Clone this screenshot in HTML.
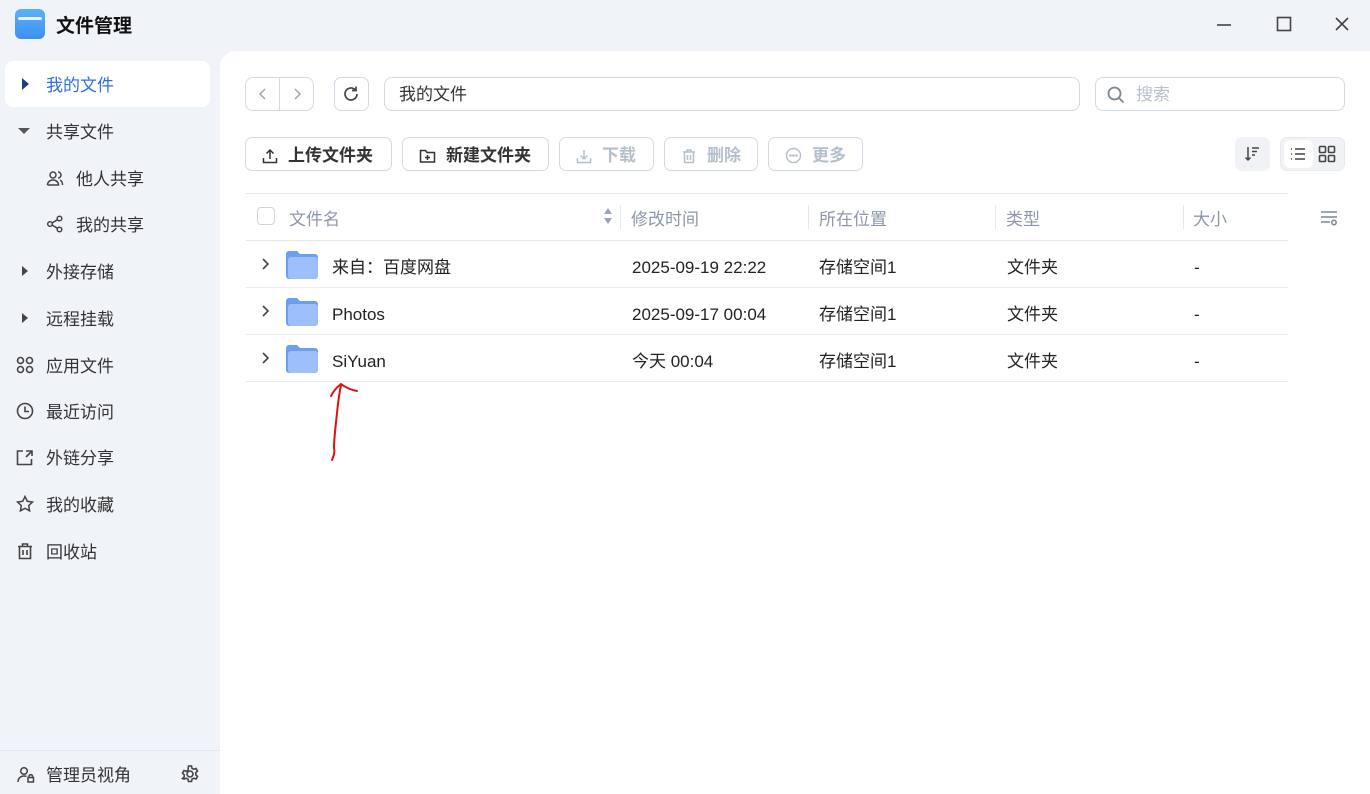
<!DOCTYPE html>
<html><head><meta charset="utf-8">
<style>
*{box-sizing:border-box;margin:0;padding:0}
body{width:1370px;height:794px;background:#f0f3f8;font-family:"Liberation Sans","Noto Sans CJK SC",sans-serif;position:relative;overflow:hidden;color:#222;line-height:27px}
.a{position:absolute}
.main{position:absolute;left:220px;top:51px;width:1150px;height:743px;background:#fff;border-top-left-radius:16px}
.nav{position:absolute;left:0;width:210px;height:46px;font-size:17px;color:#333}
.nav .ic{position:absolute;left:16px;top:14px;width:18px;height:18px}
.nav .t{position:absolute;left:46px;top:11px}
.btn{position:absolute;top:137px;height:34px;border:1px solid #d3dae5;border-radius:7px;font-size:17px;font-weight:bold;color:#333;display:flex;align-items:center;padding-top:3px}
.btn svg{margin-top:-3px}
.btn.dis{color:#b5bfcc}
.hd{position:absolute;top:206px;font-size:17px;color:#8c97a8}
.sep{position:absolute;top:205px;width:1px;height:24px;background:#e3e7ee}
.row{position:absolute;left:246px;width:1042px;height:47px;border-bottom:1px solid #e8ecf1;font-size:17px;color:#222}
.row span{position:absolute;top:13px}
svg{display:block}
</style></head><body>
<div class="a" style="left:15px;top:9px;width:30px;height:30px;border-radius:6px;background:linear-gradient(#5ab2f7,#3d8ff0)"><div style="position:absolute;left:3px;top:8px;width:24px;height:3px;background:#e7f3ff;border-radius:2px"></div></div>
<div class="a" style="left:56px;top:13px;font-size:19px;font-weight:bold;color:#111">文件管理</div>
<svg class="a" style="left:1216px;top:17px" width="16" height="16"><path d="M1 8h14" stroke="#444" stroke-width="1.6"/></svg>
<svg class="a" style="left:1276px;top:16px" width="16" height="16"><rect x="1.5" y="1.5" width="13" height="13" fill="none" stroke="#444" stroke-width="1.6"/></svg>
<svg class="a" style="left:1334px;top:16px" width="16" height="16"><path d="M2 2l12 12M14 2L2 14" stroke="#444" stroke-width="1.6"/></svg>

<div class="a" style="left:5px;top:61px;width:205px;height:46px;background:#fff;border-radius:8px"></div>
<div class="nav" style="top:61px"><svg class="ic" viewBox="0 0 18 18"><path d="M6 3l7 6-7 6z" fill="#1a3f8a"/></svg><span class="t" style="color:#2f6fe0">我的文件</span></div>
<div class="nav" style="top:108px"><svg class="ic" viewBox="0 0 18 18"><path d="M2 6h12l-6 6z" fill="#555"/></svg><span class="t">共享文件</span></div>
<div class="nav" style="top:155px"><svg class="ic" style="left:46px" viewBox="0 0 18 18" fill="none" stroke="#444" stroke-width="1.5"><circle cx="7" cy="6" r="3"/><path d="M1.5 16c0-3 2.5-5 5.5-5s5.5 2 5.5 5H1.5M12 3a3 3 0 010 6M14 11c1.5.7 2.5 2.5 2.5 5"/></svg><span class="t" style="left:76px">他人共享</span></div>
<div class="nav" style="top:201px"><svg class="ic" style="left:46px" viewBox="0 0 18 18" fill="none" stroke="#444" stroke-width="1.5"><circle cx="4" cy="9" r="2.3"/><circle cx="13.5" cy="3.5" r="2.3"/><circle cx="13.5" cy="14.5" r="2.3"/><path d="M6 8l5.5-3.3M6 10l5.5 3.3"/></svg><span class="t" style="left:76px">我的共享</span></div>
<div class="nav" style="top:248px"><svg class="ic" viewBox="0 0 18 18"><path d="M6 4l6 5-6 5z" fill="#444"/></svg><span class="t">外接存储</span></div>
<div class="nav" style="top:295px"><svg class="ic" viewBox="0 0 18 18"><path d="M6 4l6 5-6 5z" fill="#444"/></svg><span class="t">远程挂载</span></div>
<div class="nav" style="top:342px"><svg class="ic" viewBox="0 0 18 18" fill="none" stroke="#444" stroke-width="1.6"><circle cx="4.5" cy="4.5" r="3"/><circle cx="13.5" cy="4.5" r="3"/><circle cx="4.5" cy="13.5" r="3"/><circle cx="13.5" cy="13.5" r="3"/></svg><span class="t">应用文件</span></div>
<div class="nav" style="top:388px"><svg class="ic" viewBox="0 0 18 18" fill="none" stroke="#444" stroke-width="1.6"><circle cx="9" cy="9" r="7.5"/><path d="M9 4.5V9.5h4"/></svg><span class="t">最近访问</span></div>
<div class="nav" style="top:434px"><svg class="ic" viewBox="0 0 18 18" fill="none" stroke="#444" stroke-width="1.6"><path d="M7 3H1.5v13.5h14V11M10 3h6v5M16 3l-6 6"/></svg><span class="t">外链分享</span></div>
<div class="nav" style="top:481px"><svg class="ic" viewBox="0 0 18 18" fill="none" stroke="#444" stroke-width="1.5"><path d="M9 1.5l2.3 4.8 5.2.7-3.8 3.6.9 5.2L9 13.3l-4.6 2.5.9-5.2L1.5 7l5.2-.7z"/></svg><span class="t">我的收藏</span></div>
<div class="nav" style="top:528px"><svg class="ic" viewBox="0 0 18 18" fill="none" stroke="#444" stroke-width="1.6"><path d="M2 4.5h14M6.5 4.5V2h5v2.5M3.5 4.5V16.5h11V4.5M7 8v5M11 8v5"/></svg><span class="t">回收站</span></div>

<div class="a" style="left:0;top:750px;width:1370px;height:1px;background:#e3e8f0"></div>
<svg class="a" style="left:17px;top:766px" width="18" height="18" viewBox="0 0 18 18" fill="none" stroke="#444" stroke-width="1.5"><circle cx="7" cy="5" r="3.3"/><path d="M1 16c0-3.5 2.5-6 6-6 1 0 2 .2 2.5.5"/><rect x="11" y="11.5" width="5.5" height="4.5"/><path d="M12 11.5v-1.5a1.8 1.8 0 013.5 0v1.5"/></svg>
<div class="a" style="left:46px;top:762px;font-size:17px;color:#333">管理员视角</div>
<svg class="a" style="left:180px;top:764px" width="20" height="20" viewBox="0 0 20 20" fill="none" stroke="#444" stroke-width="1.6"><circle cx="10" cy="10" r="3"/><path d="M8.5 2h3l.5 2.3 1.8 1 2.2-.8 1.5 2.6-1.7 1.6v2.1l1.7 1.6-1.5 2.6-2.2-.8-1.8 1-.5 2.3h-3l-.5-2.3-1.8-1-2.2.8L2.5 14.5l1.7-1.6v-2.1L2.5 9.1 4 6.5l2.2.8 1.8-1z"/></svg>
<div class="a" style="left:240px;top:761px;font-size:14px;color:#8a94a3">共 3 项</div>

<div class="main"></div>
<div class="a" style="left:245px;top:77px;width:69px;height:34px;border:1px solid #d3dae5;border-radius:8px"></div>
<div class="a" style="left:279px;top:78px;width:1px;height:32px;background:#d3dae5"></div>
<svg class="a" style="left:256px;top:87px" width="14" height="14"><path d="M9 2L4 7l5 5" fill="none" stroke="#9aa4b2" stroke-width="1.5"/></svg>
<svg class="a" style="left:290px;top:87px" width="14" height="14"><path d="M5 2l5 5-5 5" fill="none" stroke="#9aa4b2" stroke-width="1.5"/></svg>
<div class="a" style="left:334px;top:77px;width:35px;height:34px;border:1px solid #d3dae5;border-radius:7px"></div>
<svg class="a" style="left:341px;top:84px" width="20" height="20" viewBox="0 0 20 20" fill="none" stroke="#444" stroke-width="1.7"><path d="M16 10a6 6 0 11-2-4.5"/><path d="M15 2.5V6.5h-4"/></svg>
<div class="a" style="left:384px;top:77px;width:696px;height:34px;border:1px solid #d3dae5;border-radius:8px;font-size:17px;color:#333;padding:3px 0 0 14px">我的文件</div>
<div class="a" style="left:1095px;top:77px;width:250px;height:34px;border:1px solid #d3dae5;border-radius:8px;font-size:17px;color:#b8c0cc;padding:3px 0 0 40px">搜索</div>
<svg class="a" style="left:1106px;top:85px" width="20" height="20" viewBox="0 0 20 20" fill="none" stroke="#7a8595" stroke-width="1.8"><circle cx="8.5" cy="8.5" r="6"/><path d="M13 13l4.5 4.5"/></svg>

<div class="btn" style="left:245px;width:147px"><svg style="margin:0 10px 0 16px" width="16" height="16" viewBox="0 0 16 16" fill="none" stroke="#333" stroke-width="1.5"><path d="M8 11V2M4.5 5.5L8 2l3.5 3.5M1.5 10v4.5h13V10"/></svg>上传文件夹</div>
<div class="btn" style="left:402px;width:147px"><svg style="margin:0 10px 0 16px" width="17" height="16" viewBox="0 0 17 16" fill="none" stroke="#333" stroke-width="1.5"><path d="M1.5 2.5h5l1.5 2h7.5v9.5h-14z"/><path d="M8.5 7v5M6 9.5h5"/></svg>新建文件夹</div>
<div class="btn dis" style="left:559px;width:95px"><svg style="margin:0 10px 0 16px" width="16" height="16" viewBox="0 0 16 16" fill="none" stroke="#b5bfcc" stroke-width="1.5"><path d="M8 2v9M4.5 7.5L8 11l3.5-3.5M1.5 10v4.5h13V10"/></svg>下载</div>
<div class="btn dis" style="left:664px;width:94px"><svg style="margin:0 10px 0 16px" width="16" height="16" viewBox="0 0 16 16" fill="none" stroke="#b5bfcc" stroke-width="1.5"><path d="M2 4h12M6 4V2h4v2M3.5 4v10.5h9V4M6.5 7v5M9.5 7v5"/></svg>删除</div>
<div class="btn dis" style="left:768px;width:95px"><svg style="margin:0 10px 0 16px" width="17" height="17" viewBox="0 0 17 17" fill="none" stroke="#b5bfcc" stroke-width="1.4"><circle cx="8.5" cy="8.5" r="7"/><circle cx="5.5" cy="8.5" r=".6" fill="#b5bfcc"/><circle cx="8.5" cy="8.5" r=".6" fill="#b5bfcc"/><circle cx="11.5" cy="8.5" r=".6" fill="#b5bfcc"/></svg>更多</div>

<div class="a" style="left:1235px;top:137px;width:35px;height:34px;background:#f0f2f5;border-radius:7px"></div>
<svg class="a" style="left:1244px;top:145px" width="18" height="18" viewBox="0 0 18 18" fill="none" stroke="#444" stroke-width="1.5"><path d="M4 2v13M1.5 12.5L4 15l2.5-2.5M8 3h7M8 6.5h5M8 10h3"/></svg>
<div class="a" style="left:1280px;top:137px;width:65px;height:34px;background:#f0f2f5;border-radius:7px;border:1px solid #e6e9ee"></div>
<div class="a" style="left:1284px;top:140px;width:29px;height:28px;background:#fff;border-radius:6px"></div>
<svg class="a" style="left:1289px;top:145px" width="18" height="18" viewBox="0 0 18 18" fill="none" stroke="#444" stroke-width="1.5"><path d="M6 4h10M6 9h10M6 14h10M2 4h1M2 9h1M2 14h1"/></svg>
<svg class="a" style="left:1318px;top:145px" width="18" height="18" viewBox="0 0 18 18" fill="none" stroke="#444" stroke-width="1.6"><rect x="1.5" y="1.5" width="6" height="6" rx="1"/><rect x="10.5" y="1.5" width="6" height="6" rx="1"/><rect x="1.5" y="10.5" width="6" height="6" rx="1"/><rect x="10.5" y="10.5" width="6" height="6" rx="1"/></svg>

<div class="a" style="left:246px;top:193px;width:1042px;height:1px;background:#e3e7ee"></div>
<div class="a" style="left:246px;top:240px;width:1042px;height:1px;background:#e3e7ee"></div>
<div class="a" style="left:257px;top:207px;width:18px;height:18px;border:1px solid #cdd4de;border-radius:4px"></div>
<div class="hd" style="left:289px">文件名</div>
<svg class="a" style="left:603px;top:207px" width="10" height="18"><path d="M5 1l4 6H1zM5 17l4-6H1z" fill="#9aa4b2"/></svg>
<div class="sep" style="left:620px"></div><div class="hd" style="left:631px">修改时间</div>
<div class="sep" style="left:808px"></div><div class="hd" style="left:819px">所在位置</div>
<div class="sep" style="left:995px"></div><div class="hd" style="left:1006px">类型</div>
<div class="sep" style="left:1183px"></div><div class="hd" style="left:1193px">大小</div>
<svg class="a" style="left:1320px;top:209px" width="18" height="18" viewBox="0 0 18 18" fill="none" stroke="#7a8595" stroke-width="1.5"><path d="M1 3h16M1 8h16M1 13h9"/><circle cx="14" cy="13.5" r="2.2"/></svg>

<div class="row" style="top:241px">
<svg class="a" style="left:15px;top:16px" width="10" height="14"><path d="M2 2l5 5-5 5" fill="none" stroke="#444" stroke-width="1.6"/></svg>
<svg class="a" style="left:40px;top:10px" width="32" height="28" viewBox="0 0 32 28"><path d="M0 3a3 3 0 013-3h8l3 3h15a3 3 0 013 3v19a3 3 0 01-3 3H3a3 3 0 01-3-3z" fill="#6a9ff2"/><rect x="2" y="6" width="30" height="22" rx="3" fill="#9ec0fa"/></svg>
<span style="left:86px">来自：百度网盘</span><span style="left:386px">2025-09-19 22:22</span><span style="left:573px">存储空间1</span><span style="left:761px">文件夹</span><span style="left:948px">-</span></div>
<div class="row" style="top:288px">
<svg class="a" style="left:15px;top:16px" width="10" height="14"><path d="M2 2l5 5-5 5" fill="none" stroke="#444" stroke-width="1.6"/></svg>
<svg class="a" style="left:40px;top:10px" width="32" height="28" viewBox="0 0 32 28"><path d="M0 3a3 3 0 013-3h8l3 3h15a3 3 0 013 3v19a3 3 0 01-3 3H3a3 3 0 01-3-3z" fill="#6a9ff2"/><rect x="2" y="6" width="30" height="22" rx="3" fill="#9ec0fa"/></svg>
<span style="left:86px">Photos</span><span style="left:386px">2025-09-17 00:04</span><span style="left:573px">存储空间1</span><span style="left:761px">文件夹</span><span style="left:948px">-</span></div>
<div class="row" style="top:335px">
<svg class="a" style="left:15px;top:16px" width="10" height="14"><path d="M2 2l5 5-5 5" fill="none" stroke="#444" stroke-width="1.6"/></svg>
<svg class="a" style="left:40px;top:10px" width="32" height="28" viewBox="0 0 32 28"><path d="M0 3a3 3 0 013-3h8l3 3h15a3 3 0 013 3v19a3 3 0 01-3 3H3a3 3 0 01-3-3z" fill="#6a9ff2"/><rect x="2" y="6" width="30" height="22" rx="3" fill="#9ec0fa"/></svg>
<span style="left:86px">SiYuan</span><span style="left:386px">今天 00:04</span><span style="left:573px">存储空间1</span><span style="left:761px">文件夹</span><span style="left:948px">-</span></div>

<svg class="a" style="left:320px;top:380px" width="50" height="85" viewBox="0 0 50 85" fill="none" stroke="#e01010" stroke-width="2" stroke-linecap="round"><path d="M12 80c2-5 3-8 2-12 0-10 2-25 3-35 1-10 2-18 4-28"/><path d="M11 16c3-6 6-9 10-12 4 3 10 6 16 7"/></svg>
</body></html>
